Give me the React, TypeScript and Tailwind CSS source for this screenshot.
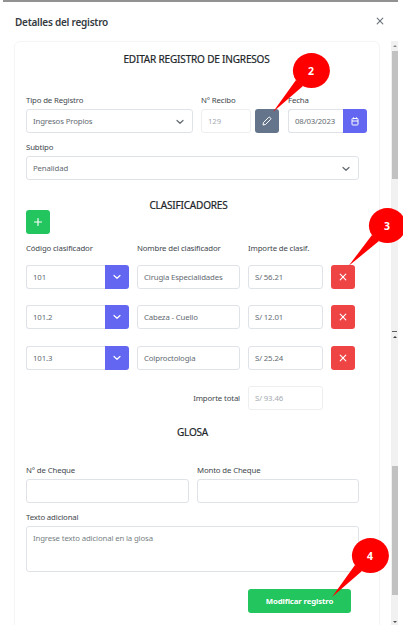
import type { ReactNode } from "react";

const box = "h-6 rounded-[3px] border border-[#dfe3e8] bg-white flex items-center px-[6px] pt-px";

function Label({ children, className = "" }: { children: ReactNode; className?: string }) {
  return (
    <div className={`h-[14px] leading-[14px] text-[7.8px] text-[#41474d] whitespace-nowrap ${className}`}>{children}</div>
  );
}

function Chevron({ className = "" }: { className?: string }) {
  return (
    <svg viewBox="0 0 8 8" className={`h-2 w-2 shrink-0 ${className}`} fill="none" stroke="currentColor" strokeWidth="1.2" strokeLinecap="round" strokeLinejoin="round">
      <path d="M1 2.5 L4 5.3 L7 2.5" />
    </svg>
  );
}

function Cross({ className = "" }: { className?: string }) {
  return (
    <svg viewBox="0 0 8 8" className={`h-2 w-2 ${className}`} fill="none" stroke="currentColor" strokeWidth="1.15" strokeLinecap="round">
      <path d="M1.2 1.2 L6.8 6.8 M6.8 1.2 L1.2 6.8" />
    </svg>
  );
}

function Heading({ children, className }: { children: ReactNode; className: string }) {
  return (
    <h2 className={`h-[14px] text-center text-[10px] leading-[12px] tracking-[-0.17px] text-[#212529] [-webkit-text-stroke:0.2px_#212529] ${className}`}>{children}</h2>
  );
}

function Row({ code, name, amount }: { code: string; name: string; amount: string }) {
  return (
    <div className="flex">
      <div className="flex w-[103px]">
        <div className={`${box} w-[79px] rounded-r-none border-r-0`}>{code}</div>
        <button className="flex h-6 w-6 items-center justify-center rounded-r-[3px] bg-[#6366f1] text-white">
          <Chevron />
        </button>
      </div>
      <div className={`${box} ml-2 w-[103px] whitespace-nowrap`}>{name}</div>
      <div className={`${box} ml-2 w-[75px]`}>{amount}</div>
      <button className="ml-2 flex h-6 w-6 items-center justify-center rounded-[3px] bg-[#ef4444] text-white">
        <Cross />
      </button>
    </div>
  );
}

function Callout({ n, className, points }: { n: string; className: string; points: string }) {
  return (
    <div className={`absolute h-[60px] w-[60px] ${className}`}>
      <svg className="absolute inset-0 h-[60px] w-[60px]" viewBox="0 0 60 60" fill="#ff0000">
        <ellipse cx="40.4" cy="17.6" rx="18.5" ry="17.5" />
        <polygon points={points} />
      </svg>
      <span className="absolute top-[11px] left-[34px] w-3 text-center text-[10.5px] leading-[14px] font-bold text-white">{n}</span>
    </div>
  );
}

export default function App() {
  return (
    <div className="relative h-[625px] w-[403px] overflow-hidden bg-white font-['Noto_Sans','Open_Sans',sans-serif] text-[7.8px] tracking-[-0.14px] text-[#636a71]">
      <div className="ml-[3px] h-[2px] w-[395px] bg-[#929292]" />
      <header className="flex h-[39px] items-center justify-between pr-[19px] pl-[15px]">
        <h1 className="text-[10px] leading-[14px] font-semibold tracking-[-0.24px] text-[#343a40]">Detalles del registro</h1>
        <Cross className="-mt-px text-[#6c757d]" />
      </header>
      <div className="flex h-[584px]">
        <main className="ml-[14px] h-[600px] w-[366px] rounded-t-[6px] border border-[#f5f5f6] pt-[11px] pl-[11px]">
          <Heading className="w-[341px]">EDITAR REGISTRO DE INGRESOS</Heading>
          <div className="mt-[26px] flex">
            <div className="w-[167px]">
              <Label>Tipo de Registro</Label>
              <div className={`${box} mt-[2px] justify-between`}>
                Ingresos Propios
                <Chevron className="mr-[2px]" />
              </div>
            </div>
            <div className="ml-2 w-[78px]">
              <Label>N° Recibo</Label>
              <div className="mt-[2px] flex justify-between">
                <div className="flex h-6 w-[50px] items-center rounded-[3px] border border-[#eceef0] px-[6px] pt-px text-[#a5abb1]">129</div>
                <button className="flex h-6 w-6 items-center justify-center rounded-[3px] bg-[#64748b] text-white">
                  <svg viewBox="0 0 10 10" className="h-[10px] w-[10px]" fill="none" stroke="currentColor" strokeWidth="1" strokeLinejoin="round">
                    <path d="M1 9 L1.5 6.5 L6.6 1.4 Q7.3 0.8 8 1.4 L8.6 2 Q9.2 2.7 8.6 3.4 L3.5 8.5 Z" />
                  </svg>
                </button>
              </div>
            </div>
            <div className="ml-[9px] w-[79px]">
              <Label>Fecha</Label>
              <div className="mt-[2px] flex">
                <div className={`${box} w-[55px] rounded-r-none border-r-0`}>08/03/2023</div>
                <button className="flex h-6 w-6 items-center justify-center rounded-r-[3px] bg-[#6366f1] text-white">
                  <svg viewBox="0 0 8 9" className="h-[9px] w-2" fill="none" stroke="currentColor" strokeWidth="1">
                    <rect x="1" y="1.5" width="6" height="6.5" rx="0.7" />
                    <path d="M1 4 H7 M2.5 0.3 V2.2 M5.5 0.3 V2.2" />
                  </svg>
                </button>
              </div>
            </div>
          </div>
          <Label className="mt-[7px]">Subtipo</Label>
          <div className={`${box} mt-[2px] w-[333px] justify-between`}>
            Penalidad
            <Chevron className="mr-[2px]" />
          </div>
          <Heading className="mt-[19px] w-[325px]">CLASIFICADORES</Heading>
          <button className="-mt-[3px] flex h-6 w-6 items-center justify-center rounded-[3px] bg-[#22c55e] text-white">
            <svg viewBox="0 0 8 8" className="h-2 w-2" stroke="currentColor" strokeWidth="1.1" strokeLinecap="round">
              <path d="M4 0.5 V7.5 M0.5 4 H7.5" />
            </svg>
          </button>
          <div className="mt-[7px] flex">
            <Label className="w-[111px]">Código clasificador</Label>
            <Label className="w-[111px]">Nombre del clasificador</Label>
            <Label>Importe de clasif.</Label>
          </div>
          <div className="mt-[10px] flex flex-col">
            <Row code="101" name="Cirugia Especialidades" amount="S/ 56.21" />
            <div className="h-4" />
            <Row code="101.2" name="Cabeza - Cuello" amount="S/ 12.01" />
            <div className="h-[17px]" />
            <Row code="101.3" name="Colproctologia" amount="S/ 25.24" />
          </div>
          <div className="mt-4 flex w-[297px] items-center justify-end">
            <Label className="mr-2">Importe total</Label>
            <div className="flex h-6 w-[75px] items-center rounded-[3px] border border-[#eceef0] px-[6px] pt-px text-[#a5abb1]">S/ 93.46</div>
          </div>
          <Heading className="mt-[16px] w-[333px]">GLOSA</Heading>
          <div className="mt-[23px] flex gap-2">
            <div className="w-[163px]">
              <Label>N° de Cheque</Label>
              <div className={`${box} mt-[2px]`} />
            </div>
            <div className="w-[162px]">
              <Label>Monto de Cheque</Label>
              <div className={`${box} mt-[2px]`} />
            </div>
          </div>
          <Label className="mt-[7px]">Texto adicional</Label>
          <div className="mt-[2px] h-[46px] w-[333px] rounded-[3px] border border-[#dfe3e8] px-[6px] pt-[5px] leading-[12px] text-[#787f86]">
            Ingrese texto adicional en la glosa
          </div>
          <button className="mt-[17px] ml-[222px] flex h-6 w-[103px] items-center justify-center rounded-[3px] bg-[#22c55e] pt-px font-bold text-white">
            Modificar registro
          </button>
        </main>
        <aside className="ml-[11px] flex w-[7px] flex-col items-center bg-[#f1f1f1]">
          <div className="flex h-[10px] items-center">
            <div className="border-x-2 border-b-2 border-x-transparent border-b-[#8b8b8b]" />
          </div>
          <div className="h-[128px] w-[6px] bg-[#c1c1c1]" />
          <div className="mt-[152px] h-px w-[5px] bg-[#606060]" />
          <div className="mt-[4px] border-x-2 border-b-2 border-x-transparent border-b-[#404040]" />
          <div className="mt-[128px] h-[129px] w-[6px] bg-[#c1c1c1]" />
          <div className="mt-[26px] border-x-2 border-t-2 border-x-transparent border-t-[#505050]" />
        </aside>
      </div>
      <Callout n="2" className="top-[53px] left-[271px]" points="25,27 2,59 32,33" />
      <Callout n="3" className="top-[208px] left-[347px]" points="25,27 1.5,58 32,33" />
      <Callout n="4" className="top-[538px] left-[330px]" points="25,27 2,59 32,33" />
    </div>
  );
}
